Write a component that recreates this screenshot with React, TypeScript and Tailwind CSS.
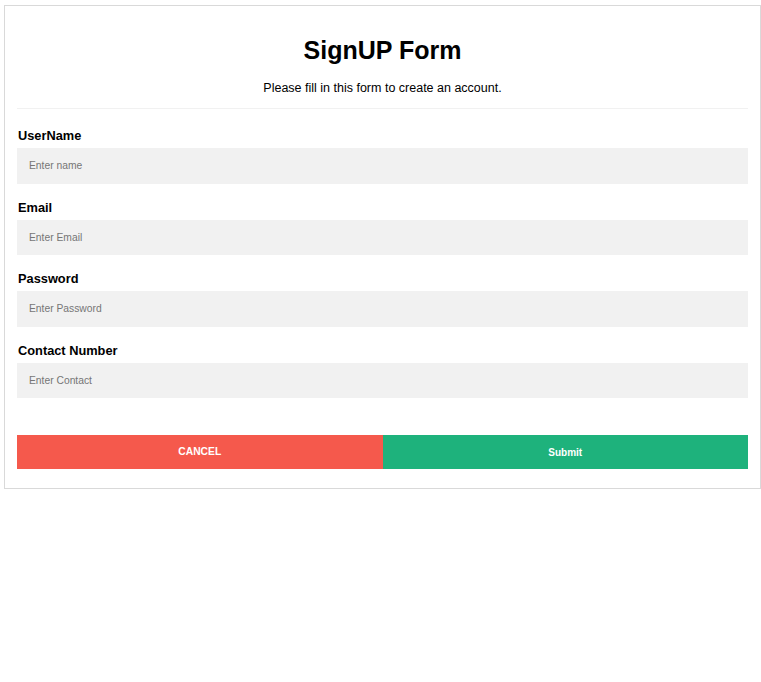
const fields = [
  { label: "UserName", placeholder: "Enter name", type: "text" },
  { label: "Email", placeholder: "Enter Email", type: "text" },
  { label: "Password", placeholder: "Enter Password", type: "password" },
  { label: "Contact Number", placeholder: "Enter Contact", type: "text" },
];

const App = () => {
  return (
    <div className="bg-white min-h-screen font-['Liberation_Sans',Arial,sans-serif] text-black pt-[5px] pl-[4px]">
      <form className="w-[757px] border border-[#d9d9d9] px-[12px] pt-[30px] pb-[19px]">
        <h1 className="text-center text-[25px] leading-[28px] font-bold">SignUP Form</h1>
        <p className="text-center text-[12.5px] leading-[16px] mt-[16px]">
          Please fill in this form to create an account.
        </p>
        <hr className="mt-[12px] border-0 border-t border-[#f1f1f1]" />

        <div className="pt-[3px]">
          {fields.map((f) => (
            <div key={f.label} className="mt-[16px]">
              <label className="block pl-px text-[12.8px] leading-[16px] font-bold">{f.label}</label>
              <input
                type={f.type}
                placeholder={f.placeholder}
                className="block w-full mt-[4px] h-[35.5px] bg-[#f1f1f1] px-3 text-[10.3px] placeholder:text-[#767676] outline-none"
              />
            </div>
          ))}
        </div>

        <div className="flex mt-[37px]">
          <button
            type="button"
            className="flex-1 h-[34px] bg-[#f5594c] text-white text-[10.3px] font-bold uppercase"
          >
            Cancel
          </button>
          <button
            type="submit"
            className="flex-1 h-[34px] bg-[#1eb27c] text-white text-[10px] font-bold"
          >
            Submit
          </button>
        </div>
      </form>
    </div>
  );
};

export default App;
